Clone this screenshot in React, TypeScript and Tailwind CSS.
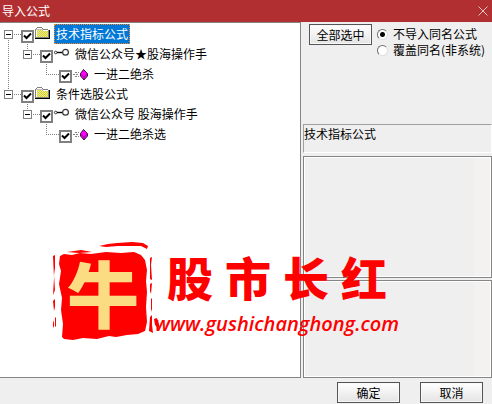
import { useState } from 'react';
import clsx from 'clsx';

type Cell = 'root-first' | 'root-last' | 'branch' | 'pass' | 'leaf' | 'empty';

type Node = {
  id: string;
  label: string;
  icon: 'folder' | 'key' | 'gem';
  cells: Cell[];
};

const nodes: Node[] = [
  { id: 'ind', label: '技术指标公式', icon: 'folder', cells: ['root-first'] },
  { id: 'ind-group', label: '微信公众号★股海操作手', icon: 'key', cells: ['pass', 'branch'] },
  { id: 'ind-item', label: '一进二绝杀', icon: 'gem', cells: ['pass', 'empty', 'leaf'] },
  { id: 'cond', label: '条件选股公式', icon: 'folder', cells: ['root-last'] },
  { id: 'cond-group', label: '微信公众号 股海操作手', icon: 'key', cells: ['empty', 'branch'] },
  { id: 'cond-item', label: '一进二绝杀选', icon: 'gem', cells: ['empty', 'empty', 'leaf'] },
];

function TreeCell({ kind }: { kind: Cell }) {
  const expander = kind === 'root-first' || kind === 'root-last' || kind === 'branch';
  const line = { stroke: '#808080', strokeDasharray: '1 1' };
  return (
    <svg className="w-[19px] h-5 shrink-0 overflow-visible" viewBox="0 0 19 20" shapeRendering="crispEdges" aria-hidden="true">
      {kind === 'pass' && <path d="M8.5 0V20" {...line} />}
      {kind === 'leaf' && <path d="M8.5 0V10M8 10.5H21" {...line} />}
      {(kind === 'root-last' || kind === 'branch') && <path d="M8.5 0V6" {...line} />}
      {kind === 'root-first' && <path d="M8.5 16V20" {...line} />}
      {expander && (
        <>
          <path d="M14 10.5H21" {...line} />
          <rect x="4.5" y="6.5" width="8" height="8" fill="#fff" stroke="#808080" />
          <path d="M6 10.5H11" stroke="#000" />
        </>
      )}
    </svg>
  );
}

function NodeIcon({ icon }: { icon: Node['icon'] }) {
  if (icon === 'folder') {
    return (
      <svg className="size-4 shrink-0" viewBox="0 0 16 16" shapeRendering="crispEdges" aria-hidden="true">
        <path d="M1 3h1V2h1V1h5v1h1v1h5v1h1v8H1z" fill="#808080" />
        <path d="M3 2h5v1h1v1h5v7H2V3h1z" fill="#c0c0c0" />
        <path
          d="M3 4.5h11M2 5.5h12M3 6.5h11M2 7.5h12M3 8.5h11M2 9.5h12M3 10.5h11"
          stroke="#ffff00"
          strokeDasharray="1 1"
          fill="none"
        />
        <path d="M2.5 4v7M3 2.5h5M9 4.5h5" stroke="#fff" fill="none" />
        <path d="M1 12.5h15M15.5 4v9" stroke="#000" fill="none" />
      </svg>
    );
  }
  if (icon === 'key') {
    return (
      <svg className="size-4 shrink-0" viewBox="0 0 16 16" aria-hidden="true">
        <circle cx="2.7" cy="6.5" r="1.3" fill="none" stroke="#333" />
        <path d="M4 6.5h5" stroke="#000" strokeWidth="1.4" />
        <circle cx="12.5" cy="6.3" r="2.9" fill="#fff" stroke="#333" strokeWidth="1.2" />
      </svg>
    );
  }
  return (
    <svg className="size-4 shrink-0" viewBox="0 0 16 16" aria-hidden="true">
      <path d="M3 6.5h4M1 8.5h6M3 10.5h4" stroke="#808080" strokeDasharray="2 1" shapeRendering="crispEdges" />
      <path d="M11.5 3.5L15.5 7.5V10L12 14L8.5 10V7.5Z" fill="#f0f" stroke="#000" strokeWidth=".8" />
      <path d="M8.5 8L12 11L15.5 8M12 11V14" fill="none" stroke="#800080" strokeWidth=".8" />
    </svg>
  );
}

function TreeRow({ node, selected, onSelect }: { node: Node; selected: boolean; onSelect: () => void }) {
  return (
    <li className="flex h-5 items-center">
      {node.cells.map((kind, i) => (
        <TreeCell key={i} kind={kind} />
      ))}
      <input
        id={node.id}
        type="checkbox"
        defaultChecked
        className="peer relative mb-px ml-0.5 size-[13px] shrink-0 appearance-none self-end border-2 border-[#808080] bg-white checked:bg-[url('data:image/svg+xml,%3Csvg%20xmlns=%22http://www.w3.org/2000/svg%22%20viewBox=%220%200%209%209%22%3E%3Cpath%20d=%22M1%203.5L3.5%206L8%201.5%22%20fill=%22none%22%20stroke=%22black%22%20stroke-width=%222%22/%3E%3C/svg%3E')]"
      />
      <NodeIcon icon={node.icon} />
      <label
        htmlFor={node.id}
        onClick={onSelect}
        className={clsx(
          'ml-1 h-5 whitespace-pre border border-dotted px-px leading-[18px]',
          selected ? 'border-[#ff8728] bg-[#0078d7] text-white' : 'border-transparent'
        )}
      >
        {node.label}
      </label>
    </li>
  );
}

function PushButton({ children }: { children: string }) {
  return (
    <button className="flex h-[21px] w-[63px] items-center justify-center border border-[#555] bg-linear-to-b from-white to-[#e4e4e4] text-xs ring-1 ring-inset ring-[#f8f8f8]">
      {children}
    </button>
  );
}

function Pane({ label, className }: { label: string; className: string }) {
  return (
    <div className={clsx('flex min-h-0 border border-[#858585] bg-[#efefef] ring-1 ring-inset ring-white', className)}>
      <textarea readOnly aria-label={label} className="m-px min-w-0 flex-1 resize-none bg-transparent outline-none" />
      <div className="my-px mr-px w-4 bg-[#f4f2f0]" />
    </div>
  );
}

function Watermark() {
  return (
    <div className="pointer-events-none absolute left-[50px] top-[240px] flex text-[#fe0000]">
      <div className="relative size-[110px] shrink-0">
        <svg className="size-full" viewBox="0 0 110 110" fill="#fe0000" aria-hidden="true">
          <path d="M10 16L14 14L22 15L30 13L41 14L56 12L71 13L84 12L91 15L95 20L97 30L96 41L97 52L96 67L97 82L95 91L88 94L77 95L66 97L59 96L47 99L33 98L23 100L14 99L12 97L13 84L11 70L12 58L9 44L11 31L9 24Z" />
          <path d="M49 6L58 4L67 3L82 2L93 3L98 6L97 9L91 6L79 6L68 6L56 7ZM17 12L31 10L42 12L29 13Z" />
          <path d="M3 16L5 15L5 28L4 35L5 50L3 55L4 38ZM3 61L5 59L5 67L4 71ZM5 78L6 77L6 87L5 86ZM3 80L4 83L4 88L3 86Z" />
          <path d="M100 18L102 17L101 25L102 40L100 39ZM100 44L102 43L101 54L100 51ZM101 58L102 59L102 69L101 72ZM100 77L102 75L102 85L103 93L99 91ZM104 79L107 78L110 88L107 87L105 85Z" />
        </svg>
        <span className="absolute inset-0 flex items-center justify-center pb-2 pr-1 font-[Noto_Sans_CJK_SC] text-[72px] font-black leading-none text-[#fbdc83]">
          牛
        </span>
      </div>
      <div className="ml-[-5px] pt-2">
        <div className="flex gap-3 pl-3 font-[Noto_Sans_CJK_SC] text-[46px] font-black leading-[56px]">
          <span>股</span>
          <span>市</span>
          <span>长</span>
          <span>红</span>
        </div>
        <div className="mt-2 font-['Open_Sans'] text-[20px] font-semibold italic leading-6">www.gushichanghong.com</div>
      </div>
    </div>
  );
}

export default function App() {
  const [selected, setSelected] = useState('ind');
  const current = nodes.find((n) => n.id === selected);

  return (
    <div className="relative flex h-screen flex-col overflow-hidden bg-[#efefef] font-['Noto_Sans_CJK_SC',sans-serif] text-xs text-black">
      {/* Title bar */}
      <header className="flex h-[22px] shrink-0 items-center justify-between bg-[#b22f31] pl-0.5 pr-1 text-white">
        <h1 className="leading-5">导入公式</h1>
        <button aria-label="关闭" className="flex size-[10px]">
          <svg className="size-full" viewBox="0 0 10 10" stroke="#e8c4c4" aria-hidden="true">
            <path d="M.5.5L9.5 9.5M9.5.5L.5 9.5" />
          </svg>
        </button>
      </header>

      <main className="flex min-h-0 flex-1 gap-0.5">
        {/* Formula tree */}
        <ul className="min-w-0 flex-1 border-y border-r border-[#858585] bg-white pt-px">
          {nodes.map((node) => (
            <TreeRow key={node.id} node={node} selected={node.id === selected} onSelect={() => setSelected(node.id)} />
          ))}
        </ul>

        {/* Options and details */}
        <aside className="flex w-[189px] shrink-0 flex-col">
          <div className="flex h-[102px] shrink-0 gap-[5px] pl-1.5 pt-0.5">
            <PushButton>全部选中</PushButton>
            <div className="flex flex-col pt-0.5">
              {['不导入同名公式', '覆盖同名(非系统)'].map((text, i) => (
                <label key={text} className="flex h-4 items-center gap-[5px] whitespace-nowrap leading-4">
                  <input
                    type="radio"
                    name="same-name"
                    defaultChecked={i === 0}
                    className="size-[11px] appearance-none rounded-full border border-[#707070] border-b-[#e0e0e0] border-r-[#e0e0e0] bg-white checked:bg-[radial-gradient(circle,#000_2px,#fff_3px)]"
                  />
                  {text}
                </label>
              ))}
            </div>
          </div>
          <p className="mb-[3px] h-[29px] shrink-0 border border-b-white border-l-[#a0a0a0] border-r-white border-t-[#a0a0a0] leading-[18px]">
            {current?.label}
          </p>
          <div className="flex min-h-0 flex-1 flex-col gap-0.5">
            <Pane label="公式说明" className="flex-5" />
            <Pane label="公式内容" className="flex-4" />
          </div>
        </aside>
      </main>

      <footer className="flex h-[26px] shrink-0 items-start justify-end gap-5 pr-[9px] pt-1">
        <PushButton>确定</PushButton>
        <PushButton>取消</PushButton>
      </footer>

      <Watermark />
    </div>
  );
}
